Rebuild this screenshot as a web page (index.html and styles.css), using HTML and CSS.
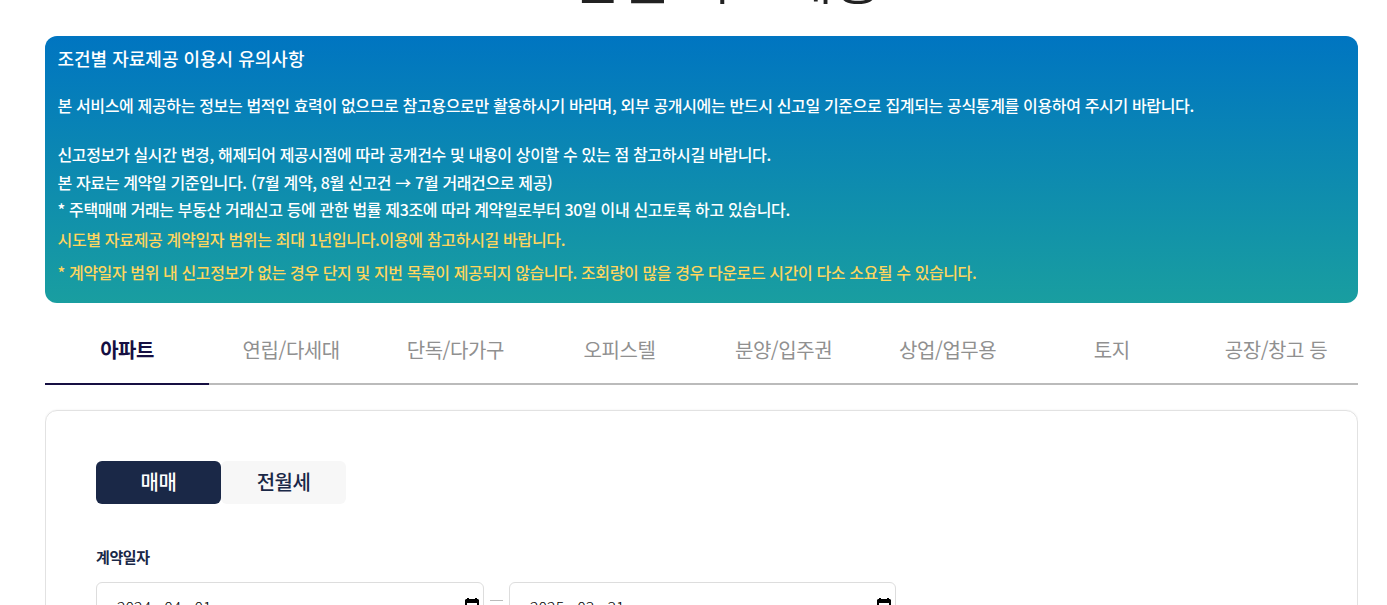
FILE: index.html
```
<!DOCTYPE html>
<html lang="ko">
<head>
  <meta charset="UTF-8">
  <meta name="viewport" content="width=device-width, initial-scale=1.0">
  <title>조건별 자료제공</title>
  <link rel="stylesheet" href="styles.css">
</head>
<body>
  <main class="container">
    <h1 class="page-title">조건별 자료제공</h1>

    <!-- notice box -->
    <section class="notice">
      <h2>조건별 자료제공 이용시 유의사항</h2>
      <p class="notice-main">본 서비스에 제공하는 정보는 법적인 효력이 없으므로 참고용으로만 활용하시기 바라며, 외부 공개시에는 반드시 신고일 기준으로 집계되는 공식통계를 이용하여 주시기 바랍니다.</p>
      <p>신고정보가 실시간 변경, 해제되어 제공시점에 따라 공개건수 및 내용이 상이할 수 있는 점 참고하시길 바랍니다.</p>
      <p>본 자료는 계약일 기준입니다. (7월 계약, 8월 신고건 → 7월 거래건으로 제공)</p>
      <p class="law">* 주택매매 거래는 부동산 거래신고 등에 관한 법률 제3조에 따라 계약일로부터 30일 이내 신고토록 하고 있습니다.</p>
      <p class="point">시도별 자료제공 계약일자 범위는 최대 1년입니다.이용에 참고하시길 바랍니다.</p>
      <p class="point last">* 계약일자 범위 내 신고정보가 없는 경우 단지 및 지번 목록이 제공되지 않습니다. 조회량이 많을 경우 다운로드 시간이 다소 소요될 수 있습니다.</p>
    </section>

    <!-- property type tabs -->
    <nav class="tabs">
      <a class="tab active">아파트</a>
      <a class="tab">연립/다세대</a>
      <a class="tab">단독/다가구</a>
      <a class="tab">오피스텔</a>
      <a class="tab">분양/입주권</a>
      <a class="tab">상업/업무용</a>
      <a class="tab">토지</a>
      <a class="tab">공장/창고 등</a>
    </nav>

    <!-- search form -->
    <section class="search-box">
      <div class="deal-type">
        <button class="deal-btn on">매매</button>
        <button class="deal-btn">전월세</button>
      </div>
      <div class="field-label">계약일자</div>
      <div class="date-range">
        <div class="date-input">
          <span class="date-text"><span>2024</span><i>-</i><span>04</span><i>-</i><span>01</span></span>
          <svg class="calendar" width="14" height="15" viewBox="0 0 14 15"><path d="M1 1h1V0h2v1h6V0h2v1h1l1 1v12l-1 1H1l-1-1V2zM2 5v8h10V5z" fill="#000"/></svg>
        </div>
        <span class="dash"></span>
        <div class="date-input">
          <span class="date-text"><span>2025</span><i>-</i><span>03</span><i>-</i><span>31</span></span>
          <svg class="calendar" width="14" height="15" viewBox="0 0 14 15"><path d="M1 1h1V0h2v1h6V0h2v1h1l1 1v12l-1 1H1l-1-1V2zM2 5v8h10V5z" fill="#000"/></svg>
        </div>
      </div>
    </section>
  </main>
</body>
</html>
```
FILE: styles.css
```
* {
  box-sizing: border-box;
}

body {
  margin: 0;
  height: 605px;
  overflow: hidden;
  background-color: #fff;
  font-family: "Noto Sans CJK KR", sans-serif;
  color: #1a2847;
}

h1, h2, p {
  margin: 0;
}

.container {
  width: 1313px;
  height: 605px;
  margin-left: 45px;
  overflow: hidden;
}

.page-title {
  height: 87px;
  margin-top: -51px;
  line-height: 56px;
  font-size: 54px;
  font-weight: 350;
  text-align: center;
  color: #222;
}

.notice {
  height: 267px;
  padding: 9px 13px 9px 12.5px;
  border-radius: 12px;
  background: linear-gradient(#0075c1, #199ea0);
  color: #fff;
  font-size: 16px;
  font-weight: 500;
  letter-spacing: -0.35px;
  white-space: nowrap;
}

.notice h2 {
  line-height: 26px;
  font-size: 18px;
  font-weight: 500;
  letter-spacing: 0;
}

.notice p {
  line-height: 28px;
}

.notice .notice-main {
  margin: 20px 0 21px;
}

.notice .law {
  margin-bottom: 1px;
  line-height: 26px;
}

.notice .point {
  line-height: 33px;
  letter-spacing: -0.32px;
  color: #ffd55e;
}

.notice .last {
  letter-spacing: -0.39px;
}

.tabs {
  display: grid;
  grid-template-columns: repeat(8, 1fr);
  height: 82px;
}

.tab {
  padding-top: 14px;
  border-bottom: 2px solid #bbb;
  line-height: 66px;
  font-size: 20px;
  letter-spacing: -0.45px;
  text-align: center;
  color: #909090;
}

.tab.active {
  border-color: #160f42;
  font-weight: 700;
  color: #160f42;
}

.search-box {
  height: 300px;
  margin-top: 25px;
  padding: 50px;
  border: 1px solid #e2e2e2;
  border-radius: 12px;
  box-shadow: 0 0 2px rgba(0, 0, 0, 0.08);
}

.deal-type {
  display: flex;
}

.deal-btn {
  width: 125px;
  height: 43px;
  padding: 0 0 3px;
  border: none;
  border-radius: 6px;
  background-color: #f7f7f7;
  color: #1a2847;
  font-family: inherit;
  font-size: 20px;
  font-weight: 500;
  letter-spacing: -0.5px;
}

.deal-btn.on {
  background-color: #1a2847;
  color: #fff;
}

.field-label {
  margin-top: 41px;
  line-height: 24px;
  font-size: 15px;
  font-weight: 700;
  letter-spacing: -0.4px;
}

.date-range {
  display: flex;
  margin-top: 13px;
}

.date-input {
  display: flex;
  justify-content: space-between;
  width: 388px;
  height: 48px;
  padding: 14px 4px 0 20px;
  border: 1px solid #ddd;
  border-radius: 6px;
}

.date-input:last-child {
  width: 387px;
}

.date-text {
  display: flex;
  line-height: 20px;
  font-size: 16px;
  font-weight: 300;
  color: #000;
}

.date-text i {
  width: 13px;
  font-style: normal;
  text-align: center;
}

.calendar {
  margin-top: 1px;
}

.dash {
  width: 13px;
  height: 1px;
  margin: 18px 6px 0;
  background-color: #bbb;
}
```
